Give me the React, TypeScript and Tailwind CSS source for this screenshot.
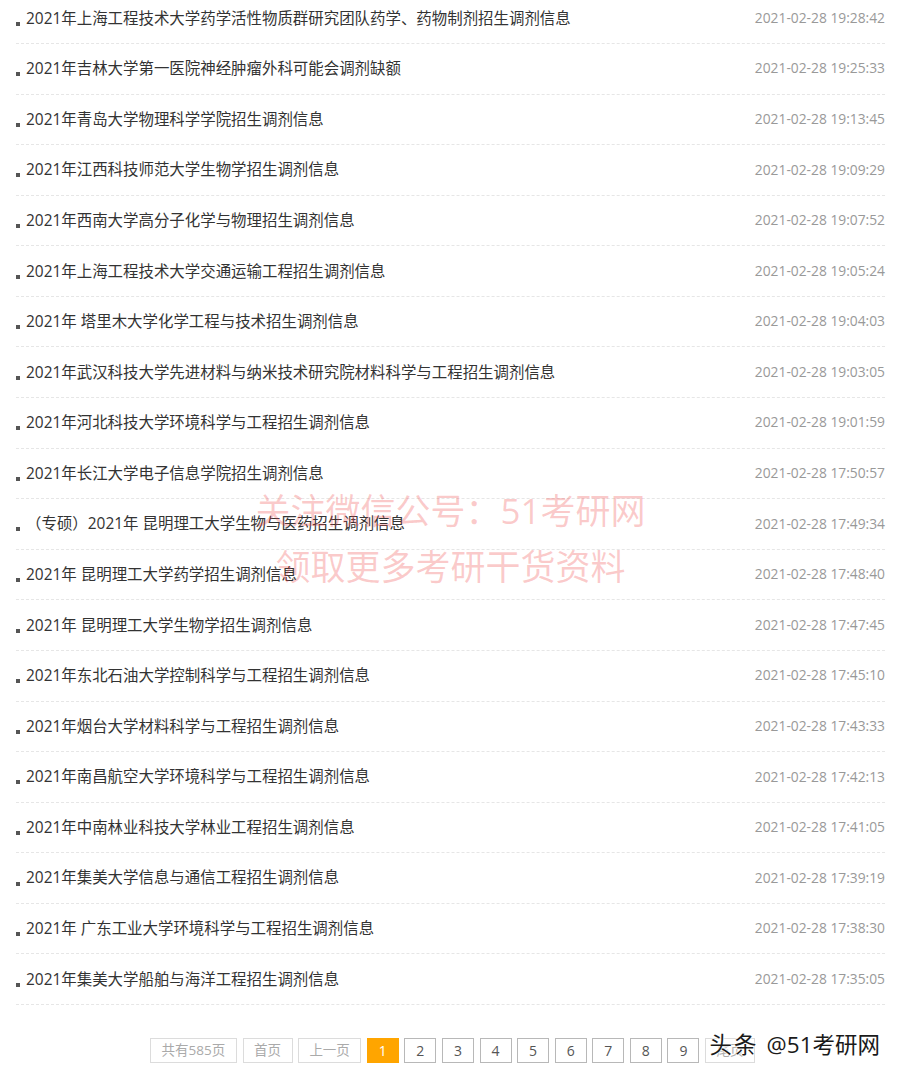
const FONT = { fontFamily: '"Open Sans", "Noto Sans CJK SC", sans-serif' };

/* --------------------------------------------------------------------------
   Data
   -------------------------------------------------------------------------- */
const POSTS: Array<{ title: string; time: string }> = [
  { title: "2021年上海工程技术大学药学活性物质群研究团队药学、药物制剂招生调剂信息", time: "2021-02-28 19:28:42" },
  { title: "2021年吉林大学第一医院神经肿瘤外科可能会调剂缺额", time: "2021-02-28 19:25:33" },
  { title: "2021年青岛大学物理科学学院招生调剂信息", time: "2021-02-28 19:13:45" },
  { title: "2021年江西科技师范大学生物学招生调剂信息", time: "2021-02-28 19:09:29" },
  { title: "2021年西南大学高分子化学与物理招生调剂信息", time: "2021-02-28 19:07:52" },
  { title: "2021年上海工程技术大学交通运输工程招生调剂信息", time: "2021-02-28 19:05:24" },
  { title: "2021年 塔里木大学化学工程与技术招生调剂信息", time: "2021-02-28 19:04:03" },
  { title: "2021年武汉科技大学先进材料与纳米技术研究院材料科学与工程招生调剂信息", time: "2021-02-28 19:03:05" },
  { title: "2021年河北科技大学环境科学与工程招生调剂信息", time: "2021-02-28 19:01:59" },
  { title: "2021年长江大学电子信息学院招生调剂信息", time: "2021-02-28 17:50:57" },
  { title: "（专硕）2021年 昆明理工大学生物与医药招生调剂信息", time: "2021-02-28 17:49:34" },
  { title: "2021年 昆明理工大学药学招生调剂信息", time: "2021-02-28 17:48:40" },
  { title: "2021年 昆明理工大学生物学招生调剂信息", time: "2021-02-28 17:47:45" },
  { title: "2021年东北石油大学控制科学与工程招生调剂信息", time: "2021-02-28 17:45:10" },
  { title: "2021年烟台大学材料科学与工程招生调剂信息", time: "2021-02-28 17:43:33" },
  { title: "2021年南昌航空大学环境科学与工程招生调剂信息", time: "2021-02-28 17:42:13" },
  { title: "2021年中南林业科技大学林业工程招生调剂信息", time: "2021-02-28 17:41:05" },
  { title: "2021年集美大学信息与通信工程招生调剂信息", time: "2021-02-28 17:39:19" },
  { title: "2021年 广东工业大学环境科学与工程招生调剂信息", time: "2021-02-28 17:38:30" },
  { title: "2021年集美大学船舶与海洋工程招生调剂信息", time: "2021-02-28 17:35:05" },
];

const PAGES = [1, 2, 3, 4, 5, 6, 7, 8, 9];

/* --------------------------------------------------------------------------
   Row
   -------------------------------------------------------------------------- */
function PostRow({ title, time }: { title: string; time: string }) {
  return (
    <li className="flex h-[50.58px] items-center border-b border-dashed border-[#e6e6e6]">
      <span className="mt-[11px] h-[4px] w-[4px] shrink-0 bg-[#555]" />
      <a className="ml-[6px] flex-1 truncate text-[15.45px] text-[#333]">{title}</a>
      <span className="ml-4 shrink-0 text-[13.8px] text-[#999]">{time}</span>
    </li>
  );
}

/* --------------------------------------------------------------------------
   Pagination
   -------------------------------------------------------------------------- */
function Pagination() {
  const plain = "flex h-[25px] items-center justify-center border border-[#dcdcdc] text-[13.5px] text-[#aaa]";
  return (
    <nav className="mt-[33px] flex justify-center gap-[5.6px] pl-[4px]">
      <span className={`${plain} w-[87px]`}>共有585页</span>
      <span className={`${plain} w-[50px]`}>首页</span>
      <span className={`${plain} w-[63px]`}>上一页</span>
      {PAGES.map((p) =>
        p === 1 ? (
          <span key={p} className="flex h-[25px] w-[32px] items-center justify-center bg-[#ffa500] text-[14px] text-white">
            {p}
          </span>
        ) : (
          <span key={p} className="flex h-[25px] w-[32px] items-center justify-center border border-[#b8b8b8] text-[14px] text-[#555]">
            {p}
          </span>
        ),
      )}
      <span className={`${plain} w-[50px]`}>尾页</span>
    </nav>
  );
}

export default function App() {
  return (
    <div className="relative h-[1074px] w-full overflow-hidden bg-white" style={FONT}>
      <ul className="-mt-[6.6px] px-4">
        {POSTS.map((post) => (
          <PostRow key={post.time} title={post.title} time={post.time} />
        ))}
      </ul>

      <Pagination />

      {/* ---- watermark overlay ---- */}
      <div className="pointer-events-none absolute left-0 right-0 top-[483px] flex flex-col items-center text-[35px] leading-[56px] text-[rgba(240,70,70,0.28)]">
        <span>关注微信公号：51考研网</span>
        <span>领取更多考研干货资料</span>
      </div>

      <div
        className="pointer-events-none absolute bottom-[16px] right-[21px] flex items-center text-[22.5px] leading-[26px] text-[#1a1a1a]"
        style={{ textShadow: "0 0 2px #fff, 0 0 2px #fff, 0 0 3px #fff" }}
      >
        <span className="tracking-[2px]">头条</span>
        <span className="ml-[8px]">@51考研网</span>
      </div>
    </div>
  );
}
